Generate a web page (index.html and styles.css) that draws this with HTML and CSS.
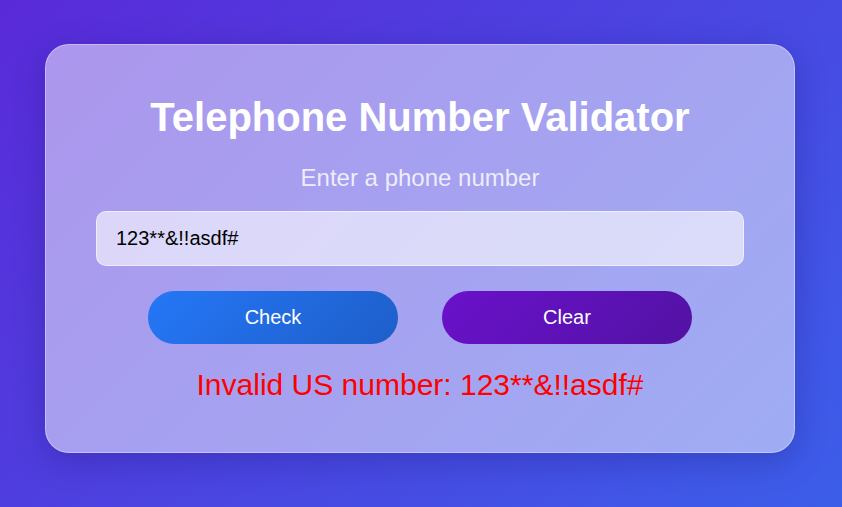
FILE: index.html
```html
<!DOCTYPE html>
<html lang="en">
<head>
<meta charset="utf-8">
<title>Telephone Number Validator</title>
<link rel="stylesheet" href="styles.css">
</head>
<body>
  <main class="card">
    <h1 class="title">Telephone Number Validator</h1>
    <label class="label" for="user-input">Enter a phone number</label>
    <input class="field" id="user-input" type="text" value="123**&amp;!!asdf#">
    <div class="actions">
      <button class="btn btn-check" type="button">Check</button>
      <button class="btn btn-clear" type="button">Clear</button>
    </div>
    <p class="result">Invalid US number: 123**&amp;!!asdf#</p>
  </main>
</body>
</html>
```
FILE: styles.css
```css
* { box-sizing: border-box; }

html, body { height: 100%; }

body {
  margin: 0;
  font-family: "Liberation Sans", Arial, sans-serif;
  background: linear-gradient(135deg, #5a2ad9 0%, #3c5ee9 100%);
  display: flex;
  align-items: center;
  justify-content: center;
  padding: 0 2px 10px 0;
}

.card {
  width: 750px;
  padding: 50px;
  border-radius: 24px;
  background: rgba(255, 255, 255, 0.5);
  border: 1px solid rgba(255, 255, 255, 0.35);
  box-shadow: 0 8px 32px rgba(20, 10, 90, 0.25);
  display: flex;
  flex-direction: column;
  align-items: center;
}

.title {
  margin: 0;
  font-size: 40px;
  font-weight: 700;
  color: #fff;
  text-align: center;
}

.label {
  margin-top: 24px;
  font-size: 24px;
  color: rgba(255, 255, 255, 0.82);
}

.field {
  margin-top: 19px;
  width: 100%;
  padding: 15px 19px;
  font-family: "Liberation Sans", Arial, sans-serif;
  font-size: 20px;
  color: #000;
  background: rgba(255, 255, 255, 0.6);
  border: 1px solid rgba(255, 255, 255, 0.55);
  border-radius: 10px;
  outline: none;
}

.actions {
  margin-top: 25px;
  display: flex;
  gap: 44px;
  justify-content: center;
}

.btn {
  width: 250px;
  padding: 15px 0;
  font-family: "Liberation Sans", Arial, sans-serif;
  font-size: 20px;
  color: #fff;
  border: none;
  border-radius: 999px;
  cursor: pointer;
}

.btn-check {
  background: linear-gradient(135deg, #2577f7 0%, #1e5ec9 100%);
}

.btn-clear {
  background: linear-gradient(135deg, #6a11cb 0%, #5212a3 100%);
}

.result {
  margin: 24px 0 0;
  font-size: 30px;
  color: #ff0000;
  text-align: center;
}
```
